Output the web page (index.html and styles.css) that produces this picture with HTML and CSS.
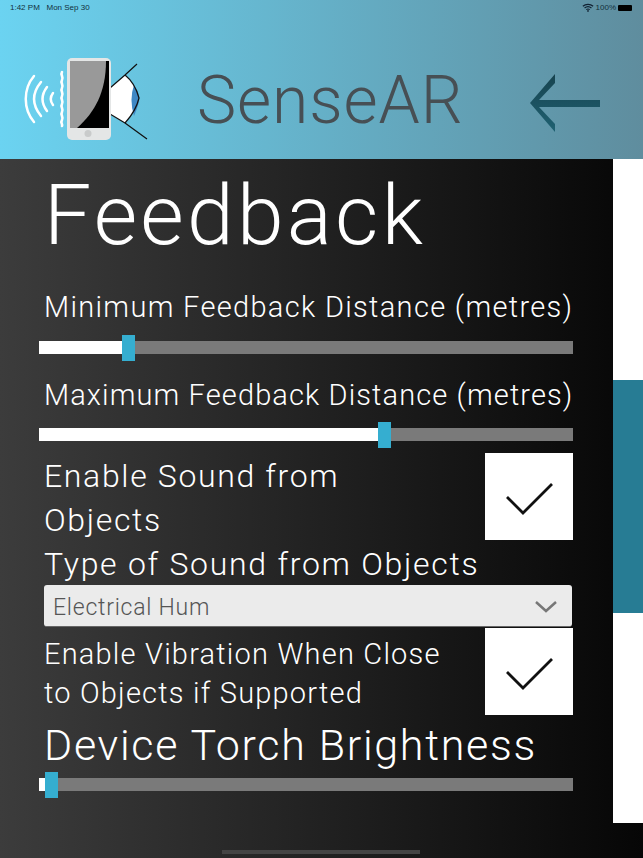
FILE: index.html
```html
<!DOCTYPE html>
<html lang="en">
<head>
    <meta charset="UTF-8">
    <meta name="viewport" content="width=device-width, initial-scale=1.0">
    <title>SenseAR</title>
    <link rel="stylesheet" href="styles.css">
</head>
<body>

<header class="header">
    <div class="status-bar">
        <span class="status-time">1:42 PM&nbsp;&nbsp; Mon Sep 30</span>
        <span class="status-right">
            <svg class="wifi" viewBox="0 0 14 10" width="12" height="9">
                <path d="M1 3.600C4.400 .6 9.600 .6 13 3.600M3 5.600C5.300 3.600 8.700 3.600 11 5.600M5 7.500C6.200 6.600 7.800 6.600 9 7.500" fill="none" stroke="#123" stroke-width="1.400"/>
                <circle cx="7" cy="9" r="1" fill="#123"/>
            </svg>
            100%
            <span class="battery"></span>
        </span>
    </div>
    <div class="header-row">
        <svg class="logo" viewBox="0 0 130 90" width="130" height="90">
            <!-- sound waves -->
            <g fill="none" stroke="#fff" stroke-linecap="round">
                <path d="M11 19C0 32 0 52 11 65" stroke-width="2.500"/>
                <path d="M18 25C9 36 9 48 18 59" stroke-width="2.500"/>
                <path d="M24 30C18 38 18 46 24 54" stroke-width="2.500"/>
                <path d="M30 36C27 40 27 44 30 48" stroke-width="2.500"/>
                <path d="M39 15C37 18 41 20 39 23C37 26 41 28 39 31C37 34 41 36 39 39C37 42 41 44 39 47C37 50 41 52 39 55C37 58 41 60 39 63C37 66 40 67 39 69" stroke-width="2.600"/>
            </g>
            <!-- eye -->
            <path d="M88 30L102 18Q112 26 116 41Q113 54 102 66L88 58Z" fill="#fff"/>
            <path d="M111 28Q118 38 116 45Q114 52 111 59Q106 42 111 28Z" fill="#3f88c5"/>
            <path d="M87 31L102 18M102 18Q112 26 116 41Q113 54 102 66L87 57M102 66L124 82M102 18L114 7" fill="none" stroke="#111" stroke-width="1.200"/>
            <!-- phone -->
            <rect x="44" y="1" width="44" height="82" rx="5" fill="#e4e6e6"/>
            <rect x="47" y="4" width="39" height="67" fill="#000"/>
            <path d="M47 4H83C83 35 72 55 54 71H47Z" fill="#999"/>
            <circle cx="65" cy="76.500" r="3.500" fill="#c9cbcb"/>
        </svg>
        <div class="app-name">SenseAR</div>
        <svg class="back-arrow" viewBox="0 0 72 60" width="72" height="60">
            <defs>
                <linearGradient id="arrowShade" x1="0" y1="0" x2="0" y2="1">
                    <stop offset="0" stop-color="#17434f"/>
                    <stop offset="1" stop-color="#1f6172"/>
                </linearGradient>
            </defs>
            <path d="M0 29L25 0V9L9 26H70V33H9L25 50V58Z" fill="url(#arrowShade)"/>
        </svg>
    </div>
</header>

<div class="page">
    <main class="content">
        <h1>Feedback</h1>

        <label class="label">Minimum Feedback Distance (metres)</label>
        <div class="slider">
            <div class="slider-fill fill-min"></div>
            <div class="slider-thumb"></div>
        </div>

        <label class="label label-max">Maximum Feedback Distance (metres)</label>
        <div class="slider">
            <div class="slider-fill fill-max"></div>
            <div class="slider-thumb"></div>
        </div>

        <div class="check-row sound-row">
            <div class="check-text">Enable Sound from Objects</div>
            <div class="checkbox">
                <svg viewBox="0 0 50 34" width="50" height="34"><path d="M2 15L18 31L47 2" fill="none" stroke="#111" stroke-width="2.800"/></svg>
            </div>
        </div>

        <div class="label-type">Type of Sound from Objects</div>
        <div class="select">
            <span>Electrical Hum</span>
            <svg viewBox="0 0 22 12" width="22" height="12"><path d="M1 1L11 10L21 1" fill="none" stroke="#777" stroke-width="2.500"/></svg>
        </div>

        <div class="check-row vibration-row">
            <div class="vibration-text">Enable Vibration When Close to Objects if Supported</div>
            <div class="checkbox">
                <svg viewBox="0 0 50 34" width="50" height="34"><path d="M2 15L18 31L47 2" fill="none" stroke="#111" stroke-width="2.800"/></svg>
            </div>
        </div>

        <div class="torch-label">Device Torch Brightness</div>
        <div class="slider slider-torch">
            <div class="slider-fill fill-torch"></div>
            <div class="slider-thumb"></div>
        </div>
    </main>

    <div class="scrollbar">
        <div class="scroll-white scroll-top"></div>
        <div class="scroll-teal"></div>
        <div class="scroll-white scroll-bottom"></div>
    </div>

    <div class="home-bar"></div>
</div>

</body>
</html>
```

FILE: styles.css
```css
* {
    box-sizing: border-box;
}
html, body {
    margin: 0;
    padding: 0;
}
body {
    width: 643px;
    height: 858px;
    overflow: hidden;
    font-family: Roboto, sans-serif;
    font-weight: 300;
    color: #fff;
}
.header {
    height: 159px;
    background: linear-gradient(90deg, #6bd3f1 0%, #5f8d9e 100%);
    display: flex;
    flex-direction: column;
}
.status-bar {
    display: flex;
    justify-content: space-between;
    padding: 3px 11px 0 10px;
    height: 14px;
    font-family: "Liberation Sans", sans-serif;
    font-size: 8px;
    font-weight: 400;
    color: #12303c;
}
.status-right {
    display: flex;
    align-items: center;
    gap: 2px;
    height: 9px;
}
.battery {
    width: 14px;
    height: 6px;
    background: #000;
    border-radius: 1px;
}
.header-row {
    display: flex;
    align-items: center;
    padding: 32px 0 0 23px;
    height: 145px;
}
.logo {
    margin-top: -2px;
}
.app-name {
    margin-left: 44px;
    font-size: 66px;
    letter-spacing: .9px;
    color: #474f54;
    line-height: 1;
    margin-top: -3px;
}
.back-arrow {
    margin-left: 66px;
    margin-top: 3px;
}
.page {
    position: relative;
    height: 699px;
    background: linear-gradient(90deg, #3c3c3c 0%, #060606 100%);
    display: flex;
}
.content {
    width: 613px;
    padding-left: 39px;
    padding-right: 40px;
}
h1 {
    margin: 11px 0 0 5px;
    font-size: 84px;
    font-weight: 300;
    letter-spacing: 3.250px;
    line-height: 92px;
}
.label {
    display: block;
    font-size: 29px;
    letter-spacing: 1.320px;
    line-height: 34px;
    margin-left: 5px;
    white-space: nowrap;
}
h1 + .label {
    margin-top: 28px;
}
.slider {
    position: relative;
    height: 13px;
    margin-top: 17px;
    background: #7a7a7a;
}
.label-max + .slider {
    margin-top: 16px;
}
.slider-torch {
    margin-top: 10px;
}
.slider-fill {
    height: 100%;
    background: #fff;
}
.fill-min {
    width: 90px;
}
.fill-max {
    width: 346px;
}
.fill-torch {
    width: 13px;
}
.slider-thumb {
    position: absolute;
    top: -6px;
    width: 13px;
    height: 26px;
    background: #35aed0;
}
.fill-min + .slider-thumb {
    left: 83px;
}
.fill-max + .slider-thumb {
    left: 339px;
}
.fill-torch + .slider-thumb {
    left: 6px;
}
.label-max {
    margin-top: 24px;
    letter-spacing: 1.110px;
}
.check-row {
    display: flex;
    justify-content: space-between;
    margin-left: 5px;
}
.sound-row {
    margin-top: 12px;
    height: 87px;
}
.check-text {
    width: 340px;
    font-size: 32px;
    letter-spacing: 1.650px;
    line-height: 44px;
    margin-top: 1px;
}
.checkbox {
    width: 88px;
    height: 87px;
    padding: 5px 0 0 2px;
    background: #fff;
    display: flex;
    align-items: center;
    justify-content: center;
}
.label-type {
    margin: 3px 0 0 5px;
    font-size: 32px;
    letter-spacing: 1.720px;
    line-height: 42px;
    white-space: nowrap;
}
.select {
    display: flex;
    justify-content: space-between;
    align-items: center;
    height: 42px;
    margin: 0 1px 0 5px;
    padding: 3px 15px 0 9px;
    background: #ebebeb;
    border-bottom: 1px solid #666;
    border-radius: 3px;
    color: #555;
    font-size: 23px;
    letter-spacing: .75px;
}
.vibration-row {
    height: 87px;
    margin-top: 1px;
}
.vibration-text {
    width: 420px;
    font-size: 29px;
    letter-spacing: 1.200px;
    padding-top: 7px;
    line-height: 39px;
}
.torch-label {
    margin: 7px 0 0 5px;
    font-size: 43px;
    letter-spacing: 1.700px;
    line-height: 46px;
    white-space: nowrap;
}
.scrollbar {
    width: 30px;
    height: 664px;
    display: flex;
    flex-direction: column;
}
.scroll-white {
    background: #fff;
}
.scroll-top {
    height: 221px;
}
.scroll-teal {
    height: 233px;
    background: #277c94;
}
.scroll-bottom {
    height: 210px;
}
.home-bar {
    position: absolute;
    left: 222px;
    bottom: 4px;
    width: 198px;
    height: 4px;
    background: #444;
}
```
